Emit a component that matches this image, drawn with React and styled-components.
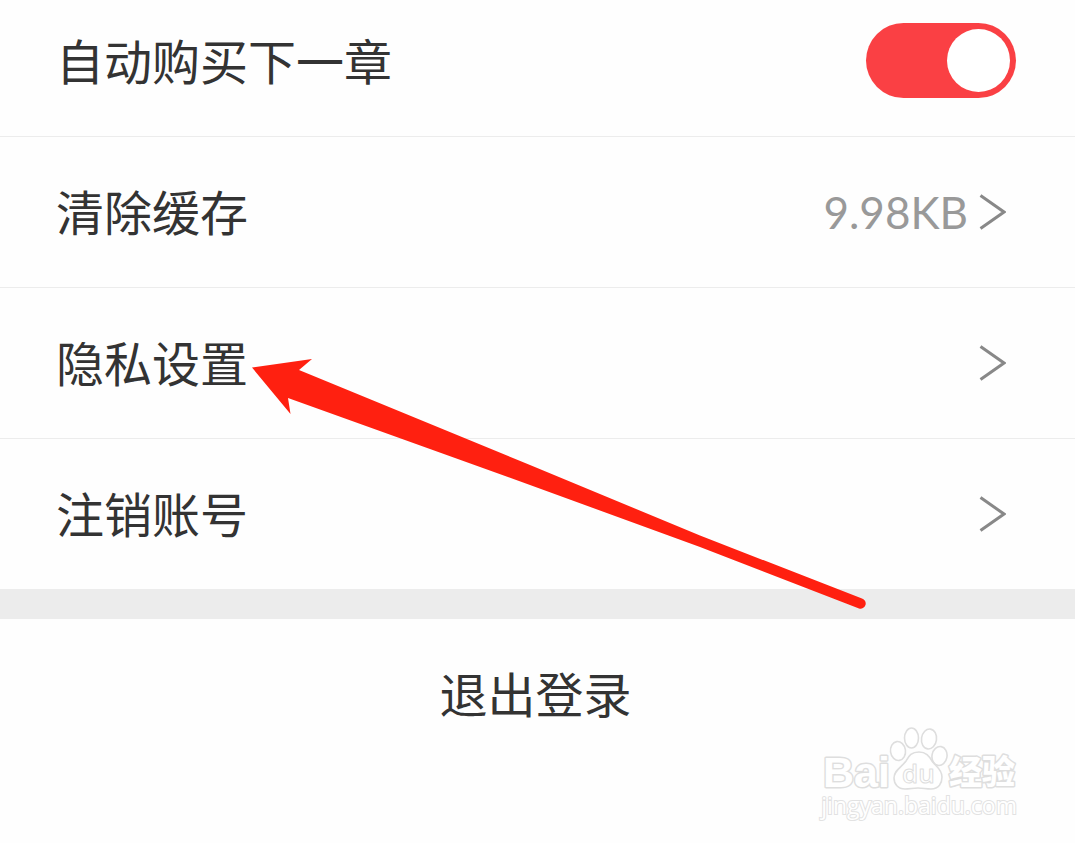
import React, { useState } from 'react';
import styled, { createGlobalStyle } from 'styled-components';

const GlobalStyle = createGlobalStyle`
  body {
    margin: 0;
    background: #fefefe;
  }
`;

const Page = styled.main`
  position: relative;
  min-height: 100vh;
  overflow: hidden;
  box-sizing: border-box;
  color: #333;
  font-family: 'Noto Sans CJK SC', sans-serif;
  font-size: 48px;
  line-height: 68px;
`;

const List = styled.ul`
  margin: 0;
  padding: 0;
  list-style: none;
  border-bottom: 30px solid #ececec;
`;

const Item = styled.li`
  border-bottom: 1px solid #ececec;

  &:last-child {
    border-bottom: none;
  }
`;

const SwitchRow = styled.label`
  display: flex;
  align-items: center;
  justify-content: space-between;
  padding: 23px 59px 38px 56px;
`;

const RowButton = styled.button`
  display: flex;
  align-items: center;
  width: 100%;
  padding: 39px 69px 39px 56px;
  border: none;
  background: none;
  color: inherit;
  font: inherit;
  text-align: ${(props) => (props.$centered ? 'center' : 'left')};
  cursor: pointer;
`;

const LogoutButton = styled(RowButton)`
  padding-right: 60px;
`;

const Label = styled.span`
  flex: 1;
  padding-bottom: 4px;
`;

const Value = styled.span`
  margin-right: 11px;
  color: #999;
  font-family: Lato, sans-serif;
  font-size: 44px;
`;

const Switch = styled.input`
  appearance: none;
  display: flex;
  align-items: center;
  justify-content: ${(props) => (props.checked ? 'flex-end' : 'flex-start')};
  box-sizing: border-box;
  width: 150px;
  height: 75px;
  margin: 0;
  padding: 6px;
  border-radius: 38px;
  background: ${(props) => (props.checked ? '#fa4044' : '#ddd')};
  cursor: pointer;

  &::before {
    content: '';
    width: 63px;
    height: 63px;
    border-radius: 50%;
    background: #fff;
  }
`;

const Arrow = styled.svg`
  position: absolute;
  top: 357px;
  left: 252px;
  pointer-events: none;
`;

const Watermark = styled.div`
  position: absolute;
  right: 58px;
  bottom: 25px;
  display: flex;
  flex-direction: column;
  align-items: flex-end;
  pointer-events: none;
`;

const LogoMark = styled.svg`
  display: block;
  overflow: visible;
`;

const Site = styled.span`
  color: #fff;
  font-family: 'Open Sans', sans-serif;
  font-size: 23px;
  line-height: 26px;
  -webkit-text-stroke: 2px #e2e2e2;
  paint-order: stroke fill;
`;

const Chevron = () => (
  <svg width="27" height="36" viewBox="0 0 27 36" fill="none" aria-hidden="true">
    <path d="M1.5 1.5 25 18 1.5 34.5" stroke="#888" strokeWidth="3" />
  </svg>
);

const Logo = () => (
  <LogoMark width="198" height="68" viewBox="-4 0 198 68" fill="#fff" stroke="#dedede" strokeWidth="1.6" strokeLinejoin="round">
    <g style={{ paintOrder: 'stroke' }}>
      <text x="0" y="63" fontFamily="Liberation Sans" fontWeight="700" fontSize="43" strokeWidth="3">Bai</text>
      <text x="126" y="60" fontFamily="Noto Sans CJK SC" fontWeight="900" fontSize="33" strokeWidth="3">经验</text>
    </g>
    <ellipse cx="75" cy="27" rx="7.5" ry="9.5" transform="rotate(-8 75 27)" />
    <ellipse cx="88.5" cy="14" rx="7" ry="10" />
    <ellipse cx="106" cy="15" rx="7.5" ry="10" transform="rotate(8 106 15)" />
    <ellipse cx="116.5" cy="32" rx="7.5" ry="9.5" transform="rotate(10 116.5 32)" />
    <path d="M96 28c-8 0-10 4-13 9-4 6-12 9-12 17 0 6 4 11 11 11 5 0 8-1 13-1s8 1 13 1c8 0 11-6 11-12 0-8-6-10-10-16-3-5-6-9-13-9Z" />
    <text x="79" y="59" fontFamily="Open Sans" fontWeight="600" fontSize="26" strokeWidth="1">du</text>
  </LogoMark>
);

const LINKS = [
  { label: '清除缓存', value: '9.98KB' },
  { label: '隐私设置' },
  { label: '注销账号' },
];

const App = () => {
  const [autoBuy, setAutoBuy] = useState(true);

  return (
    <Page>
      <GlobalStyle />
      <List>
        <Item>
          <SwitchRow>
            <Label>自动购买下一章</Label>
            <Switch
              type="checkbox"
              role="switch"
              checked={autoBuy}
              onChange={(e) => setAutoBuy(e.target.checked)}
            />
          </SwitchRow>
        </Item>
        {LINKS.map((link) => (
          <Item key={link.label}>
            <RowButton type="button">
              <Label>{link.label}</Label>
              {link.value && <Value>{link.value}</Value>}
              <Chevron />
            </RowButton>
          </Item>
        ))}
      </List>
      <LogoutButton type="button" $centered>
        <Label>退出登录</Label>
      </LogoutButton>

      <Arrow width="616" height="253" viewBox="0 0 616 253" aria-hidden="true">
        <path
          d="M0 10.5 60 2 47 13 278 108 448 178.5 610 241.5A5 5 0 0 1 607 251.5L448 190 278 128 36 41 38.5 57Z"
          fill="#ff2010"
        />
      </Arrow>
      <Watermark>
        <Logo />
        <Site>jingyan.baidu.com</Site>
      </Watermark>
    </Page>
  );
};

export default App;
